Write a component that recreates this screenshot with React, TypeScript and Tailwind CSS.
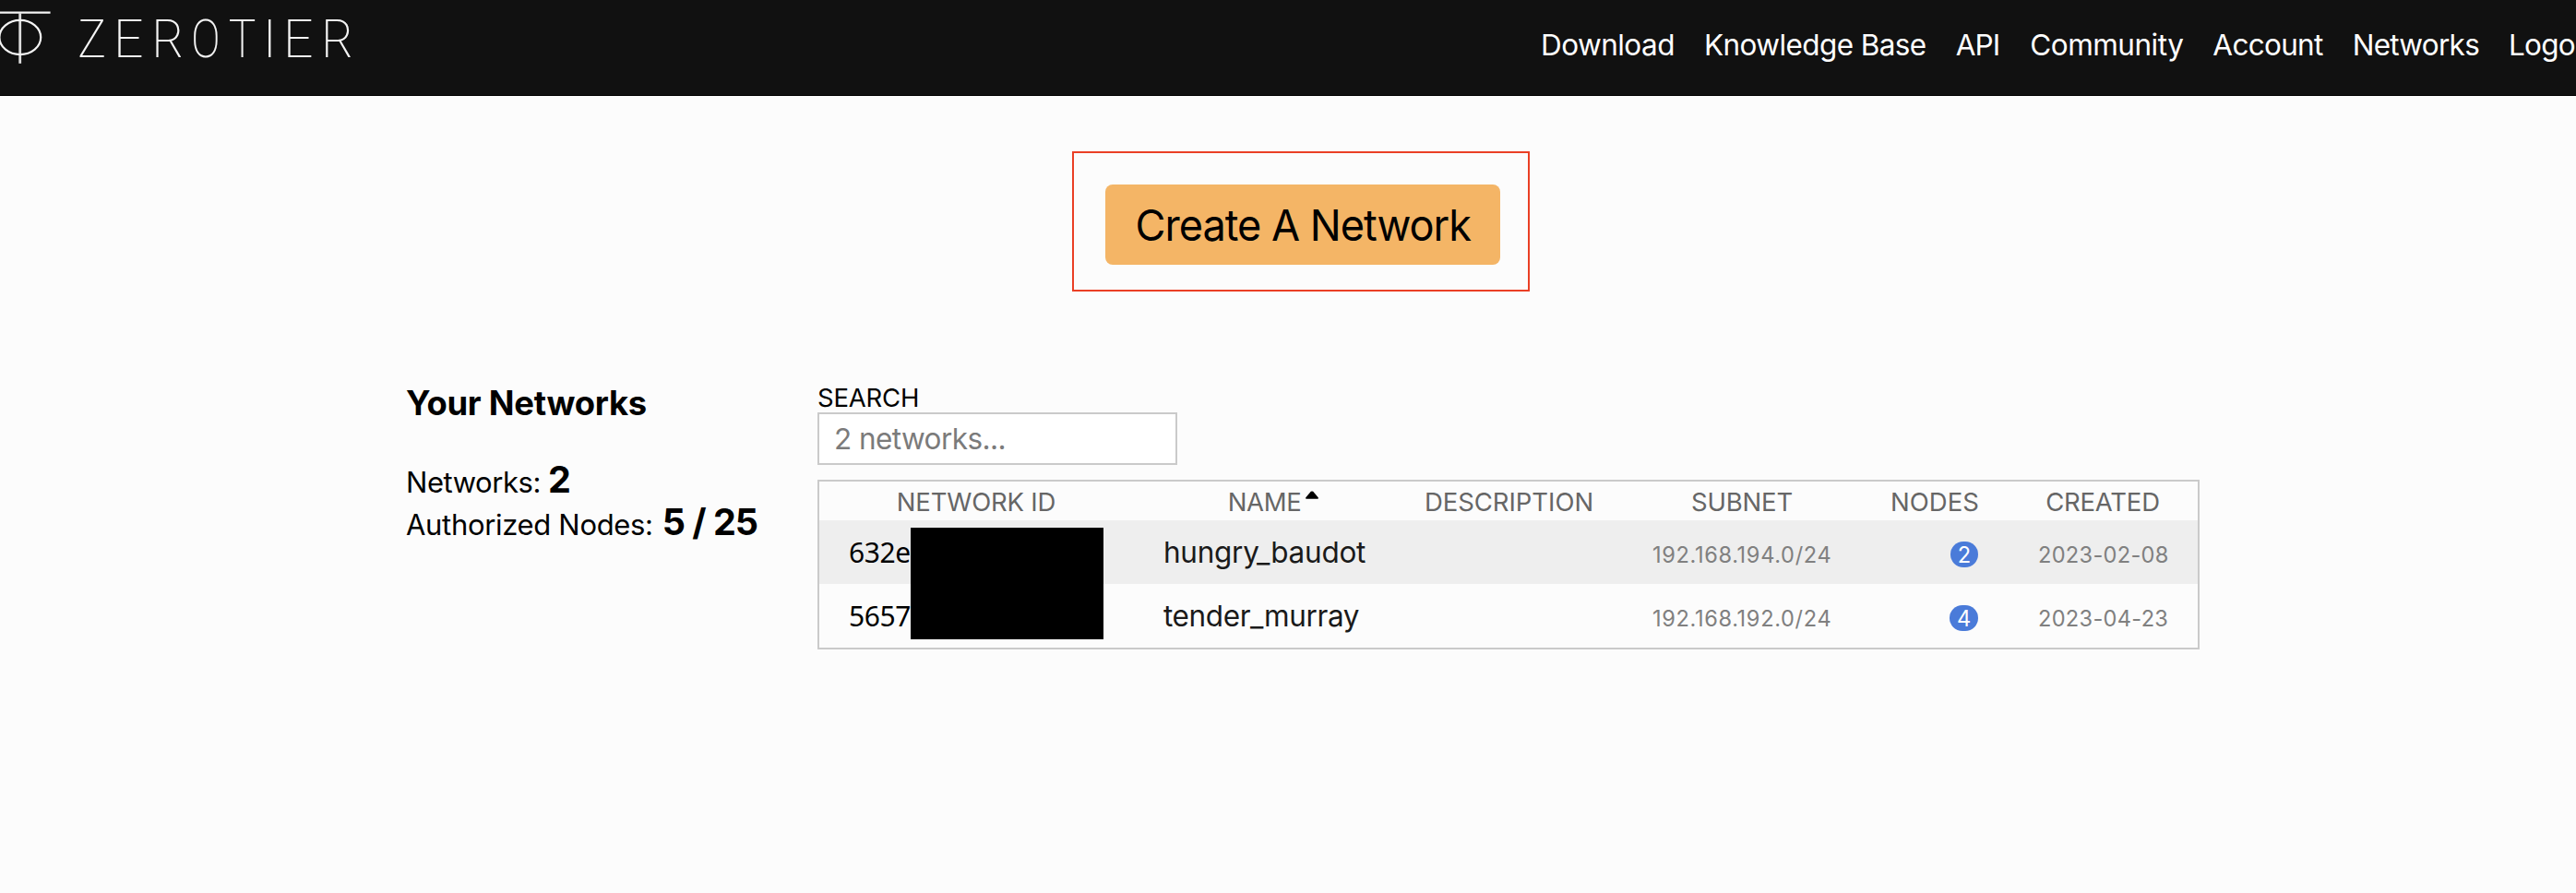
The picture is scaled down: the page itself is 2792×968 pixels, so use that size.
const navItems = [
  { label: "Download", spacing: "tracking-[-0.54px]" },
  { label: "Knowledge Base", spacing: "tracking-[-0.59px]" },
  { label: "API", spacing: "tracking-[-0.9px] mr-px" },
  { label: "Community", spacing: "tracking-[-0.5px]" },
  { label: "Account", spacing: "tracking-[-0.7px]" },
  { label: "Networks", spacing: "tracking-[-0.72px]" },
  { label: "Logo", spacing: "tracking-[-0.8px]" },
];

const logoLetters = [
  { ch: "Z", x: 84.2, sx: 0.9 },
  { ch: "E", x: 123, sx: 1 },
  { ch: "R", x: 164.5, sx: 0.94 },
  { ch: "O", x: 207.2, sx: 0.82 },
  { ch: "T", x: 247.8, sx: 0.87 },
  { ch: "I", x: 284.8, sx: 1 },
  { ch: "E", x: 307, sx: 1 },
  { ch: "R", x: 348.2, sx: 0.94 },
];

const networks = [
  { id: "632e", name: "hungry_baudot", spacing: "tracking-[-0.27px]", subnet: "192.168.194.0/24", nodes: 2, created: "2023-02-08", row: "bg-[#eeeeee]", badge: "w-[30px]" },
  { id: "5657", name: "tender_murray", spacing: "tracking-[-0.4px]", subnet: "192.168.192.0/24", nodes: 4, created: "2023-04-23", row: "", badge: "w-[31px]" },
];

function Logo() {
  return (
    <svg width="400" height="80" viewBox="0 0 400 80" className="block shrink-0">
      <g fill="none" stroke="#f4f4f4" strokeWidth="2.2">
        <path d="M0 13.7H54.6" />
        <path d="M21.7 14V68.8" strokeWidth="2.8" stroke="#dcdcdc" />
        <ellipse cx="21.8" cy="40.5" rx="22.4" ry="18.6" />
      </g>
      {logoLetters.map((l, i) => (
        <g key={i} transform={`translate(${l.x} 62) scale(${l.sx} 1)`}>
          <text className="font-['Roboto',sans-serif] text-[57px] font-extralight" fill="#f4f4f4">{l.ch}</text>
        </g>
      ))}
    </svg>
  );
}

function Header() {
  return (
    <header className="flex h-[104px] justify-between overflow-hidden border-b border-black bg-[#111111]">
      <Logo />
      <nav className="flex h-[98px] w-[1122px] shrink-0 items-center gap-8 text-[31.5px] whitespace-nowrap text-white">
        {navItems.map((n) => (
          <a key={n.label} className={n.spacing}>{n.label}</a>
        ))}
      </nav>
    </header>
  );
}

function Summary() {
  return (
    <section className="w-[446px] shrink-0 whitespace-nowrap">
      <h3 className="text-[36.4px] leading-[44px] font-bold tracking-[-0.24px]">Your Networks</h3>
      <div className="mt-[38px] flex h-[46px] items-baseline text-[31px] leading-[46px]">
        <span className="tracking-[-0.43px]">Networks:</span>
        <strong className="ml-2 text-[39.5px] font-bold">2</strong>
      </div>
      <div className="flex h-[46px] items-baseline text-[31px] leading-[46px]">
        <span className="tracking-[-0.32px]">Authorized Nodes:</span>
        <strong className="ml-2.5 text-[39.5px] font-bold tracking-[-1.03px]">5 / 25</strong>
      </div>
    </section>
  );
}

const columns = "grid grid-cols-[340px_285px_245px_260px_158px_206px]";

function NetworkTable() {
  return (
    <div className="relative mt-4 h-[184px] w-[1498px] border-2 border-[#cacaca]">
      <div className={`${columns} h-[42px] text-center text-[27.5px] leading-[44px] text-[#666666]`}>
        <span className="tracking-[-0.19px]">NETWORK ID</span>
        <span className="tracking-[-0.34px]">
          <span className="relative">
            NAME
            <svg width="14" height="9" viewBox="0 0 14 9" className="absolute top-[5px] left-full ml-[5px]">
              <path d="M0.3 8.7V7.2L5.8 0.8Q7 0 8.2 0.8L13.7 7.2V8.7Z" fill="#000" />
            </svg>
          </span>
        </span>
        <span className="tracking-[-0.04px]">DESCRIPTION</span>
        <span className="tracking-[-0.17px]">SUBNET</span>
        <span>NODES</span>
        <span className="tracking-[-0.2px]">CREATED</span>
      </div>
      {networks.map((n) => (
        <div key={n.id} className={`${columns} h-[69px] items-center ${n.row}`}>
          <span className="pl-8 font-['Noto_Sans',sans-serif] text-[30px] leading-[40px] tracking-[-0.4px] text-black">{n.id}</span>
          <span className={`pl-[33px] text-[31.5px] leading-[40px] text-[#1a1a1a] ${n.spacing}`}>{n.name}</span>
          <span />
          <span className="pt-[7px] pl-[33px] text-[23.6px] leading-[28px] tracking-[0.65px] text-[#808080]">{n.subnet}</span>
          <span className="flex justify-end pt-[5px] pr-8">
            <span className={`h-[28px] rounded-[14px] bg-[#4a7bd9] text-center text-[23.6px] leading-[29px] text-white ${n.badge}`}>{n.nodes}</span>
          </span>
          <span className="pt-[7px] pl-[33px] text-[23.6px] leading-[28px] tracking-[0.3px] text-[#808080]">{n.created}</span>
        </div>
      ))}
      <div className="absolute top-[50px] left-[99px] h-[121px] w-[209px] bg-black" />
    </div>
  );
}

export default function App() {
  return (
    <div className="h-[968px] w-[2792px] overflow-hidden bg-[#fcfcfc] font-['Inter',sans-serif] text-black">
      <Header />
      <div className="mt-[60px] ml-[1162px] h-[152px] w-[496px] border-2 border-[#ea3f25] pt-[34px] pl-[34px]">
        <button className="block h-[87px] w-[428px] rounded-lg bg-[#f4b566] text-[47px] leading-[87px] whitespace-nowrap">
          <span className="inline-block scale-x-[0.96] tracking-[-1.07px]">Create A Network</span>
        </button>
      </div>
      <main className="mt-[99px] flex pl-[440px]">
        <Summary />
        <section className="flex flex-col">
          <label className="h-8 text-[27.5px] leading-[32px] tracking-[-0.19px]">SEARCH</label>
          <input
            placeholder="2 networks..."
            className="h-[57px] w-[390px] border-2 border-[#cacaca] bg-white pl-4 text-[31.5px] tracking-[-0.57px] placeholder:text-[#7b7b7b]"
          />
          <NetworkTable />
        </section>
      </main>
    </div>
  );
}
